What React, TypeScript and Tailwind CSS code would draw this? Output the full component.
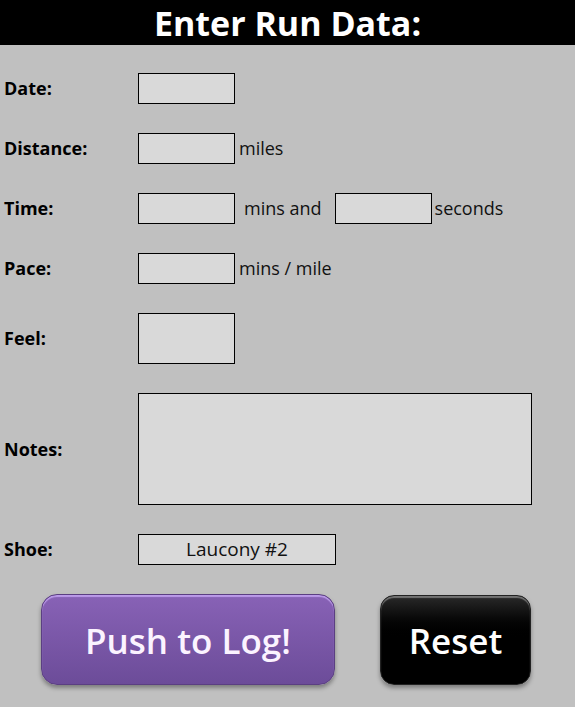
import type { ReactNode } from "react";

const font = { fontFamily: '"Open Sans", "Noto Sans", sans-serif' };

function Field({ className = "w-[97px] h-[31px]" }: { className?: string }) {
  return <div className={`${className} border border-black bg-[#d9d9d9]`} />;
}

function Row({ label, children }: { label: string; children: ReactNode }) {
  return (
    <div className="flex items-center">
      <span className="w-[134px] text-[18px] font-bold text-black">{label}</span>
      <div className="flex items-center text-[18px] text-[#111]">{children}</div>
    </div>
  );
}

export default function App() {
  return (
    <div className="min-h-[707px] bg-[#c0c0c0]" style={font}>
      <header className="flex h-[45px] items-center justify-center bg-black">
        <h1 className="text-[34px] font-bold leading-none text-white">Enter Run Data:</h1>
      </header>
      <div className="flex flex-col gap-[29px] pl-[4px] pt-[28px]">
        <Row label="Date:">
          <Field />
        </Row>
        <Row label="Distance:">
          <Field />
          <span className="ml-[4px]">miles</span>
        </Row>
        <Row label="Time:">
          <Field />
          <span className="ml-[9px] mr-[13px]">mins and</span>
          <Field />
          <span className="ml-[3px]">seconds</span>
        </Row>
        <Row label="Pace:">
          <Field />
          <span className="ml-[4px]">mins / mile</span>
        </Row>
        <Row label="Feel:">
          <Field className="h-[51px] w-[97px]" />
        </Row>
        <Row label="Notes:">
          <Field className="h-[112px] w-[394px]" />
        </Row>
        <Row label="Shoe:">
          <div className="flex h-[31px] w-[198px] items-center justify-center border border-black bg-[#d9d9d9] text-[19px]">
            Laucony #2
          </div>
        </Row>
        <div className="flex items-center pl-[37px]">
          <button className="h-[91px] w-[294px] rounded-[16px] border border-[#5b3f82] bg-gradient-to-b from-[#8862b6] to-[#6c4c99] pt-[4px] text-[35px] font-semibold text-[#fbf3ff] shadow-[0_3px_4px_rgba(0,0,0,0.35),inset_0_2px_1px_rgba(210,180,255,0.7)]">
            Push to Log!
          </button>
          <button className="ml-[45px] h-[90px] w-[151px] rounded-[14px] border border-[#222] bg-gradient-to-b from-[#2a2a2a] via-black to-black pt-[4px] text-[35px] font-semibold text-white shadow-[0_3px_4px_rgba(0,0,0,0.35),inset_0_2px_1px_rgba(255,255,255,0.35)]">
            Reset
          </button>
        </div>
      </div>
    </div>
  );
}
